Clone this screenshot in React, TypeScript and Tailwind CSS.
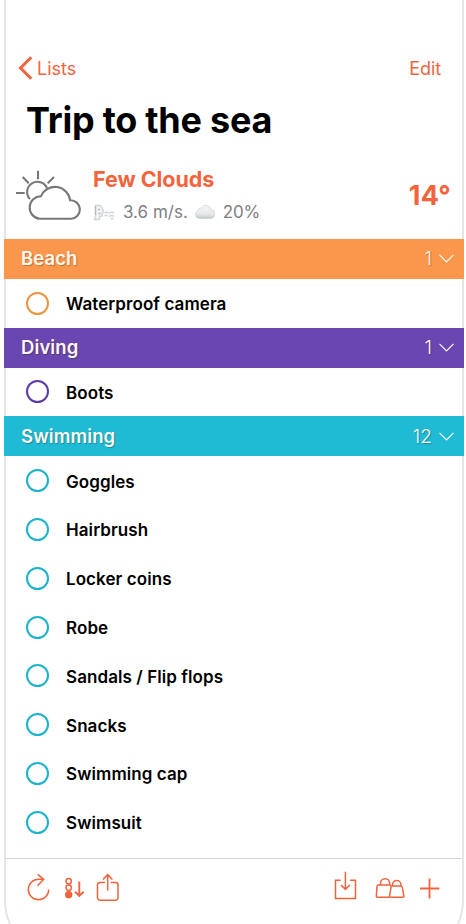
import type { ReactNode } from 'react';

type Section = {
  title: string;
  count: number;
  barClass: string;
  ringClass: string;
  items: string[];
};

const sections: Section[] = [
  {
    title: 'Beach',
    count: 1,
    barClass: 'bg-[#fb974c]',
    ringClass: 'border-[#f0933f]',
    items: ['Waterproof camera'],
  },
  {
    title: 'Diving',
    count: 1,
    barClass: 'bg-[#6a47b0]',
    ringClass: 'border-[#5a3aa8]',
    items: ['Boots'],
  },
  {
    title: 'Swimming',
    count: 12,
    barClass: 'bg-[#1fbad3]',
    ringClass: 'border-[#1bb2cb]',
    items: [
      'Goggles',
      'Hairbrush',
      'Locker coins',
      'Robe',
      'Sandals / Flip flops',
      'Snacks',
      'Swimming cap',
      'Swimsuit',
    ],
  },
];

const NavBar = () => (
  <nav className="flex h-[22px] items-center justify-between pr-[21px] pl-[12px] text-[18px] text-[#f0653f]">
    <button type="button" className="flex items-center gap-[4px]">
      <svg width="15" height="24" viewBox="0 0 15 24" fill="none" stroke="currentColor" strokeWidth="3">
        <path d="M13.3 1.2 2.5 12l10.8 10.8" />
      </svg>
      <span>Lists</span>
    </button>
    <button type="button" className="tracking-[-0.1px]">
      Edit
    </button>
  </nav>
);

const WeatherIcon = () => (
  <svg width="67" height="52" viewBox="0 0 67 52" fill="none" stroke="#77787b" strokeWidth="2.1">
    <path d="M23 .7v8.600M7.700 7l6 6.300M39 7l-6.300 6.300M1 23h8.700" />
    <path d="M14.800 29A10.300 10.300 0 1 1 32 18.300" />
    <path d="M24.500 48.800H56a9.300 9.300 0 0 0-.9-18.600A15.200 15.200 0 0 0 26 26.200a11.350 11.350 0 0 0-1.500 22.600Z" />
  </svg>
);

const WindIcon = () => (
  <svg width="23" height="17" viewBox="0 0 23 17" fill="none" strokeWidth="1.300">
    <path
      d="M2.500 1.500h5l2.500 4 .5 2.500-1.500 1.500.5 2.500-3 .5v3H1.500l1-4Z"
      fill="#f1f3f4"
      stroke="#d0d5d8"
    />
    <path d="M2.500 2v9M5 5.500h2M5.500 9.500h2" stroke="#b3b9be" />
    <path d="M11.500 8.500h4M11.500 11.500h3M16 9.500q2.500-2.500 5-.5M16 12.500q2.500-2 5 0M17.500 14.500h3" stroke="#ccd2d7" />
  </svg>
);

const CloudIcon = () => (
  <svg width="22" height="16" viewBox="0 0 22 16">
    <defs>
      <linearGradient id="cloud" x1="0" y1="0" x2="0" y2="1">
        <stop offset="0" stopColor="#f3f5f6" />
        <stop offset="0.650" stopColor="#e6eaec" />
        <stop offset="1" stopColor="#bfc6ca" />
      </linearGradient>
    </defs>
    <path
      d="M5 14.500a4 4 0 0 1-1-7.700 3.300 3.300 0 0 1 3.500-3 5 5 0 0 1 9.300 1.700 4.600 4.600 0 0 1 .7 9Z"
      fill="url(#cloud)"
      stroke="#ccd2d6"
      strokeWidth="0.700"
    />
  </svg>
);

const Weather = () => (
  <div className="flex h-[60px] items-start pr-[11px] pl-[9px]">
    <WeatherIcon />
    <div className="ml-[11px] flex-1">
      <p className="-mt-[2px] text-[21.500px] leading-[22px] font-bold tracking-[-0.050px] text-[#f4633c]">
        Few Clouds
      </p>
      <div className="mt-[12px] flex items-center text-[17px] leading-[20px] text-[#808083]">
        <WindIcon />
        <span className="ml-[7px]">3.6 m/s.</span>
        <span className="ml-[6px]">
          <CloudIcon />
        </span>
        <span className="ml-[7px] tracking-[-0.2px]">20%</span>
      </div>
    </div>
    <p className="mt-[11px] text-[27px] leading-[30px] font-bold tracking-[0.3px] text-[#f4633c]">14°</p>
  </div>
);

const SectionHeader = ({ section }: { section: Section }) => (
  <div
    className={`-mx-[2px] flex h-[40px] items-center justify-between pr-[10px] pl-[17px] text-[#fff8ee] ${section.barClass}`}
  >
    <h2 className="text-[18.500px] font-semibold tracking-[0.1px] [text-shadow:1px_1px_1px_rgba(0,0,0,0.25)]">
      {section.title}
    </h2>
    <div className="flex items-center gap-[7px]">
      <span className="pt-px text-[19px] font-light [text-shadow:1px_1px_1px_rgba(0,0,0,0.25)]">{section.count}</span>
      <svg width="15" height="9" viewBox="0 0 15 9" fill="none" stroke="currentColor" strokeWidth="1.200">
        <path d="m.5.8 7 7 7-7" />
      </svg>
    </div>
  </div>
);

const ItemRow = ({ label, ringClass }: { label: string; ringClass: string }) => (
  <li className="flex h-[48.800px] items-center pl-[20px]">
    <span className={`size-[23px] rounded-full border-2 ${ringClass}`} />
    <span className="ml-[17px] pt-[3px] text-[17px] font-semibold tracking-[0.080px] text-black">{label}</span>
  </li>
);

const ToolButton = ({ width, children }: { width: number; children: ReactNode }) => (
  <button type="button" className="block">
    <svg width={width} height="32" viewBox={`0 0 ${width} 32`} fill="none" stroke="currentColor" strokeWidth="1.500">
      {children}
    </svg>
  </button>
);

const Toolbar = () => (
  <footer className="flex h-[100px] shrink-0 items-start justify-between border-t border-[#d4d4d6] px-[21px] pt-[12px] text-[#f0633d]">
    <div className="flex">
      <ToolButton width={23}>
        <path d="M21.700 18.500A10.200 10.200 0 1 1 11.500 8.300H16" />
        <path d="m10.700 3.300 6 5-6.200 6.400" />
      </ToolButton>
      <div className="ml-[14px]">
        <ToolButton width={21}>
          <circle cx="4.700" cy="10.200" r="2.700" />
          <circle cx="4.700" cy="16.800" r="2.700" />
          <circle cx="4.700" cy="23.700" r="2.900" fill="currentColor" />
          <path d="M15.300 10.500v14M11 20.700l4.300 4.200 4.300-4.200" strokeWidth="1.900" />
        </ToolButton>
      </div>
      <div className="ml-[11px]">
        <ToolButton width={24}>
          <path d="M9 11.500H4a2.500 2.500 0 0 0-2.500 2.500v12.800A2.500 2.500 0 0 0 4 29.300h15.500a2.500 2.500 0 0 0 2.500-2.500V14a2.500 2.500 0 0 0-2.500-2.500h-4.800M11.700 19.500V4M7 8.600l4.700-4.900 4.700 4.900" />
        </ToolButton>
      </div>
    </div>
    <div className="flex">
      <ToolButton width={24}>
        <path d="M6.700 9.300H1.500v18.200h20V9.300h-5.300M11.400.7v17.500M7 14l4.400 4.400 4.400-4.400" />
      </ToolButton>
      <div className="ml-[17px]">
        <ToolButton width={30}>
          <path d="M14.500 26.300H2.300a1 1 0 0 1-1-1l.7-9.800a1.500 1.500 0 0 1 1.500-1.500H14.500a1.500 1.500 0 0 1 1.500 1.500M5.500 14v-1.700a4.600 4.600 0 0 1 9.200 0V14" />
          <path d="m16 16.300-1.500 9a1 1 0 0 0 1 1h12.400a1 1 0 0 0 1-1l-1.600-9a1.600 1.600 0 0 0-1.500-1.300h-8.300a1.600 1.600 0 0 0-1.500 1.300ZM17.500 15v-1.200a4.200 4.200 0 0 1 8.400 0V15" />
        </ToolButton>
      </div>
      <div className="ml-[14px]">
        <ToolButton width={22}>
          <path d="M10.500 7.500v20M1 17.500h19.300" strokeWidth="1.800" />
        </ToolButton>
      </div>
    </div>
  </footer>
);

export default function App() {
  return (
    <div className="h-[924px] overflow-hidden bg-white pr-[2px] pl-[4px] font-[Inter,'Liberation_Sans',sans-serif]">
      <div className="-mt-[60px] flex h-[1020px] flex-col rounded-[60px] border-2 border-[#e5e5e7] pt-[115px]">
        <NavBar />
        <h1 className="mt-[18px] h-[46px] pl-[20px] text-[36px] leading-[46px] font-bold tracking-[-0.250px] text-black">
          Trip to the sea
        </h1>
        <div className="mt-[27px] h-[68.800px]">
          <Weather />
        </div>
        <main className="flex-1">
          {sections.map((section) => (
            <section key={section.title}>
              <SectionHeader section={section} />
              <ul>
                {section.items.map((item) => (
                  <ItemRow key={item} label={item} ringClass={section.ringClass} />
                ))}
              </ul>
            </section>
          ))}
        </main>
        <Toolbar />
      </div>
    </div>
  );
}
